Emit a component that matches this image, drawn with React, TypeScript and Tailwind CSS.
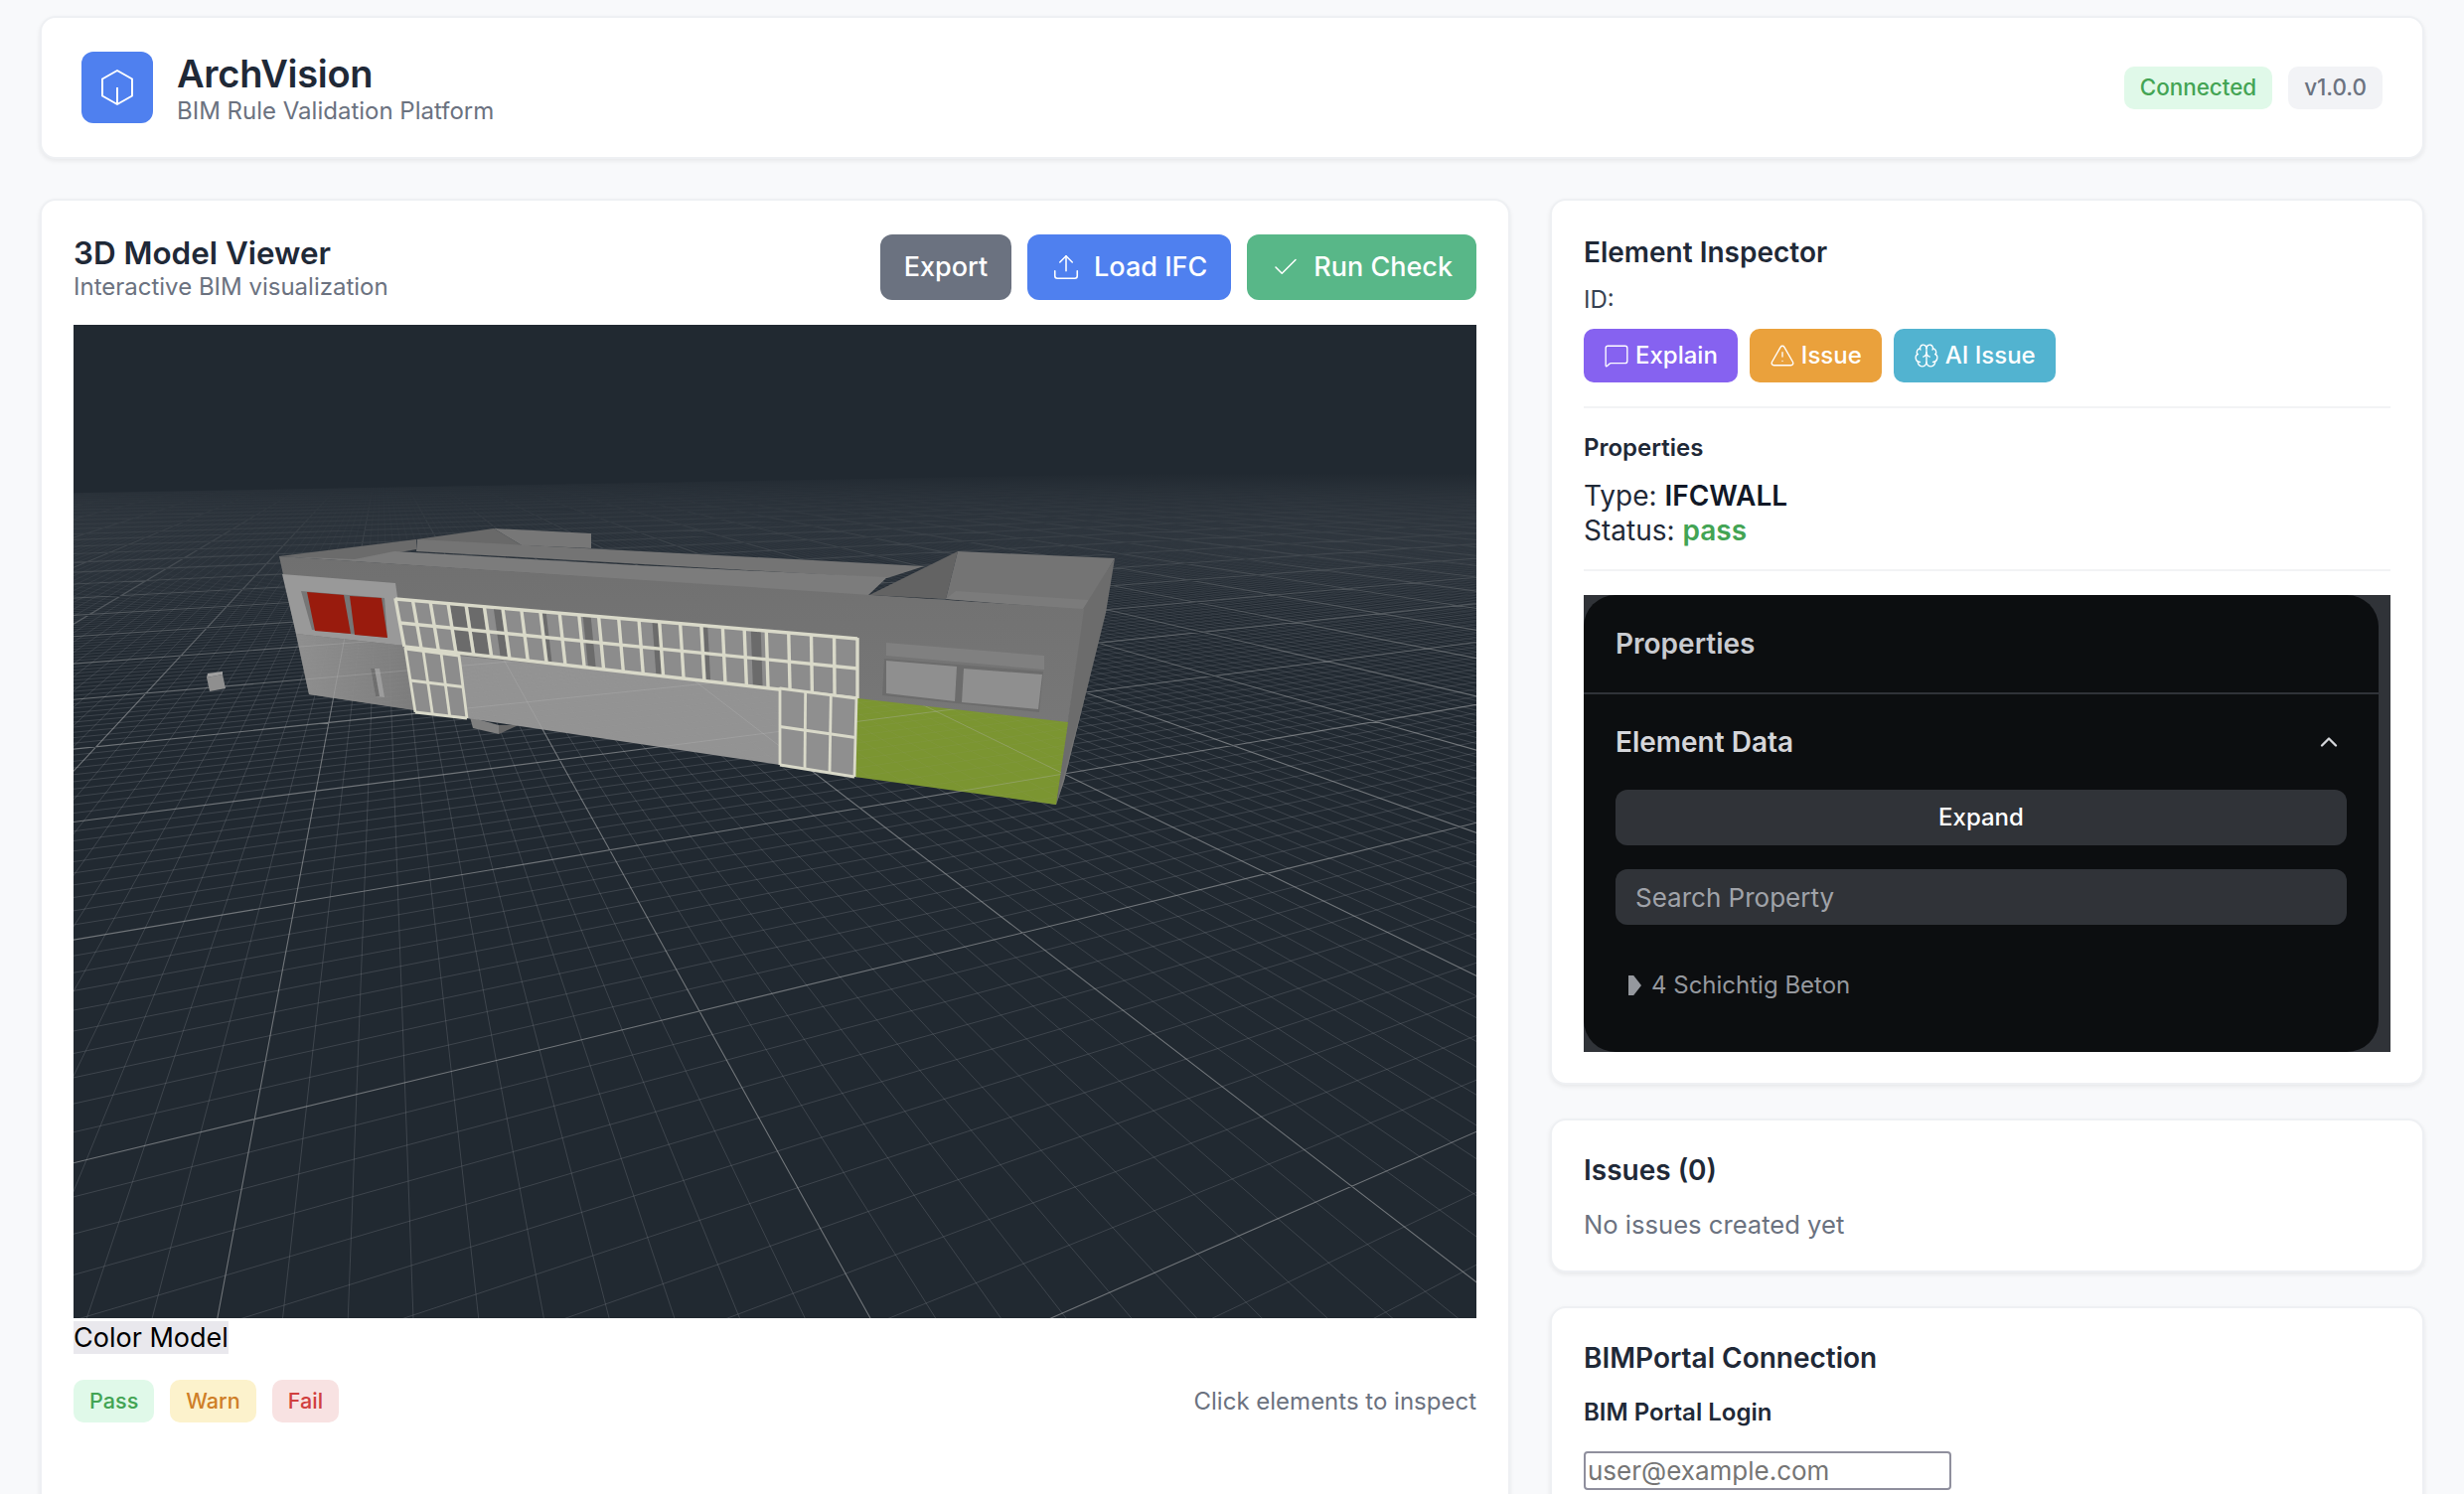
import React from "react";
import { Upload, Check, MessageSquare, TriangleAlert, Brain, ChevronUp } from "lucide-react";

// ground plane projection measured from the major grid crossings
const project = (u: number, v: number) => {
  const w = 1 + 0.1589 * u - 0.3935 * v;
  return [
    (630 + 476.7 * u - 122 * v) / w,
    (691 + 18.43 * u - 45.65 * v) / w,
  ];
};

const segU = (u: number) => {
  const near = Math.min(3, (1 + 0.1589 * u - 0.03) / 0.3935);
  if (near <= -28) return "";
  const a = project(u, -28);
  const b = project(u, near);
  return `M${a[0].toFixed(1)} ${a[1].toFixed(1)}L${b[0].toFixed(1)} ${b[1].toFixed(1)}`;
};

const segV = (v: number) => {
  const start = Math.max(-44, (0.03 - 1 + 0.3935 * v) / 0.1589);
  if (start >= 44) return "";
  const a = project(start, v);
  const b = project(44, v);
  return `M${a[0].toFixed(1)} ${a[1].toFixed(1)}L${b[0].toFixed(1)} ${b[1].toFixed(1)}`;
};

let minorPath = "";
let majorPath = "";
for (let i = -440; i <= 440; i++) {
  if (i % 10 === 0) majorPath += segU(i / 10);
  else minorPath += segU(i / 10);
}
for (let i = -280; i <= 30; i++) {
  if (i % 10 === 0) majorPath += segV(i / 10);
  else minorPath += segV(i / 10);
}

type Pt = [number, number];

const quadPoint = (q: Pt[], s: number, t: number): Pt => {
  const top: Pt = [q[0][0] + (q[1][0] - q[0][0]) * s, q[0][1] + (q[1][1] - q[0][1]) * s];
  const bot: Pt = [q[3][0] + (q[2][0] - q[3][0]) * s, q[3][1] + (q[2][1] - q[3][1]) * s];
  return [top[0] + (bot[0] - top[0]) * t, top[1] + (bot[1] - top[1]) * t];
};

const warp = (t: number, k: number) => t / (t + k * (1 - t));

const Poly = ({ p, fill }: { p: string; fill: string }) => <polygon points={p} fill={fill} />;

const Curtain = ({
  q,
  cols,
  rows,
  k = 1,
  fill,
  width = 3.4,
  strips = [],
}: {
  q: Pt[];
  cols: number;
  rows: number;
  k?: number;
  fill: string;
  width?: number;
  strips?: [number, number, number][];
}) => {
  const lines: React.ReactNode[] = [];
  for (let i = 0; i <= cols; i++) {
    const s = warp(i / cols, k);
    const a = quadPoint(q, s, -0.015);
    const b = quadPoint(q, s, 1);
    lines.push(<line key={`c${i}`} x1={a[0]} y1={a[1]} x2={b[0]} y2={b[1]} />);
  }
  for (let j = 0; j <= rows; j++) {
    const a = quadPoint(q, 0, j / rows);
    const b = quadPoint(q, 1, j / rows);
    lines.push(<line key={`r${j}`} x1={a[0]} y1={a[1]} x2={b[0]} y2={b[1]} />);
  }
  return (
    <g>
      <polygon points={q.map((p) => p.join(",")).join(" ")} fill={fill} />
      {strips.map(([col, from, to]) => {
        const s0 = warp((col + from) / cols, k);
        const s1 = warp((col + to) / cols, k);
        const pts = [quadPoint(q, s0, 0), quadPoint(q, s1, 0), quadPoint(q, s1, 1), quadPoint(q, s0, 1)];
        return <polygon key={`${col}-${from}`} points={pts.map((p) => p.join(",")).join(" ")} fill="#6b6b6b" />;
      })}
      <g stroke="#d9d9c9" strokeWidth={width}>
        {lines}
      </g>
    </g>
  );
};

const ModelScene = () => (
  <svg viewBox="74 327 1412 1000" className="block w-full h-full">
    <defs>
      <linearGradient id="fog" x1="0" y1="0" x2="0" y2="1">
        <stop offset="0" stopColor="#212931" stopOpacity="1" />
        <stop offset="0.38" stopColor="#212931" stopOpacity="1" />
        <stop offset="0.47" stopColor="#212931" stopOpacity="0.86" />
        <stop offset="0.62" stopColor="#212931" stopOpacity="0.6" />
        <stop offset="0.8" stopColor="#212931" stopOpacity="0.28" />
        <stop offset="1" stopColor="#212931" stopOpacity="0" />
      </linearGradient>
      <linearGradient id="wall" x1="0" y1="0" x2="0" y2="1">
        <stop offset="0" stopColor="#707070" />
        <stop offset="1" stopColor="#7b7b7b" />
      </linearGradient>
      <linearGradient id="lowerLeft" x1="0" y1="0" x2="1" y2="0">
        <stop offset="0" stopColor="#8f8f8f" />
        <stop offset="1" stopColor="#7c7c7c" />
      </linearGradient>
      <clipPath id="planes">
        <polygon points="462,660 785,693 785,770 470,723" />
        <polygon points="863,703 1075,727 1063,810 860,782" />
        <polygon points="298,638 407,650 417,715 311,699" />
      </clipPath>
    </defs>

    <g transform="translate(74 327)" fill="none">
      <path d={minorPath} stroke="#8b9096" strokeOpacity="0.34" strokeWidth="0.8" />
      <path d={majorPath} stroke="#aeb0b2" strokeOpacity="0.56" strokeWidth="1.1" />
    </g>
    <rect x="74" y="327" width="1412" height="393" fill="url(#fog)" />

    {/* small parts under and beside the building */}
    <Poly p="208,682 224,679 227,693 211,696" fill="#8f8f8f" />
    <Poly p="208,682 224,679 224,676 209,678" fill="#a0a0a0" />
    <Poly p="473,722 502,730 502,739 476,733" fill="#7f7f7f" />
    <Poly p="502,730 522,730 502,739" fill="#666666" />

    {/* roof */}
    <Poly p="497,532 595,537 595,552 525,549" fill="#777777" />
    <Poly p="419,543 497,532 525,549 440,552" fill="#696969" />
    <Poly p="281,560 419,543 419,553 357,564" fill="#6b6b6b" />
    <Poly p="420,543 930,570 893,582 419,555" fill="#747474" />
    <Poly p="397,555 640,569 893,581 873,600 281,560 357,563" fill="#7c7c7c" />
    <Poly p="964,555 952,603 875,599" fill="#636363" />
    <Poly p="964,555 1122,562 1092,614 952,603" fill="#747474" />
    <Poly p="962,595 1096,604 1092,614 952,603" fill="#7b7b7b" />
    <Poly p="1122,562 1090,613 1063,810 1071,786 1113,617" fill="#6c6c6c" />
    <Poly p="1092,700 1113,617 1071,786 1063,810" fill="#747474" />

    {/* front wall */}
    <Poly p="281,560 1091,613 1063,810 311,699" fill="url(#wall)" />
    <Poly p="284,578 398,587 407,650 298,638" fill="#999999" />
    <Poly p="303,595 387,602 390,642 314,634" fill="#767676" />
    <Poly p="309,596 346,599 353,638 317,635" fill="#991b0d" />
    <Poly p="352,600 384,602 390,642 357,639" fill="#991b0d" />
    <Poly p="298,638 407,650 417,715 311,699" fill="url(#lowerLeft)" />
    <Poly p="373,673 382,673 387,702 378,701" fill="#9d9d9d" />
    <Poly p="373,673 377,673 382,701 378,701" fill="#6e6e6e" />
    <Poly p="462,660 785,693 785,770 470,723" fill="#939393" />

    {/* right windows */}
    <Poly p="892,647 1051,660 1051,674 892,660" fill="#808080" />
    <Poly p="890,663 1050,676 1046,717 888,700" fill="#6c6c6c" />
    <Poly p="892,665 963,671 961,706 892,698" fill="#8f8f8f" />
    <Poly p="970,673 1049,679 1045,714 968,707" fill="#8f8f8f" />

    {/* green wall */}
    <Poly p="863,703 1075,727 1063,810 860,782" fill="#7b9531" />

    {/* grid shows through the lower walls */}
    <g clipPath="url(#planes)">
      <g transform="translate(74 327)" fill="none">
        <path d={minorPath} stroke="#a6a6a6" strokeOpacity="0.09" strokeWidth="0.8" />
        <path d={majorPath} stroke="#b4b4b4" strokeOpacity="0.35" strokeWidth="1" />
      </g>
    </g>

    {/* curtain walls */}
    <Curtain
      q={[
        [398, 603],
        [863, 643],
        [863, 703],
        [407, 651],
      ]}
      cols={23}
      rows={2}
      k={1.167}
      fill="#8c8c8c"
      strips={[
        [3, 0.1, 0.9],
        [4, 0.1, 0.9],
        [5, 0.5, 0.9],
        [8, 0.1, 0.3],
        [10, 0.2, 0.6],
        [13, 0.65, 0.95],
        [16, 0.1, 0.3],
        [18, 0.3, 0.75],
      ]}
    />
    <Curtain
      q={[
        [408, 653],
        [462, 660],
        [470, 723],
        [418, 717],
      ]}
      cols={3}
      rows={2}
      fill="#8c8c8c"
      width={2.8}
    />
    <Poly p="786,755 860,766 860,780 786,770" fill="#7a7a7a" />
    <Curtain
      q={[
        [785, 693],
        [862, 703],
        [860, 782],
        [785, 770],
      ]}
      cols={3}
      rows={2}
      fill="#8f8f8f"
      width={2.8}
    />
  </svg>
);

const Card = ({ className, children }: { className?: string; children: React.ReactNode }) => (
  <div className={`bg-white rounded-2xl border-2 border-[#eef0f3] shadow-[0_2px_5px_rgba(0,0,0,0.07)] ${className ?? ""}`}>
    {children}
  </div>
);

const ActionButton = ({ className, children }: { className: string; children: React.ReactNode }) => (
  <button className={`h-[66px] px-6 rounded-xl text-white text-[27px] font-medium flex items-center gap-[13px] ${className}`}>
    {children}
  </button>
);

const SmallButton = ({ className, children }: { className: string; children: React.ReactNode }) => (
  <button className={`h-[54px] px-5 rounded-[10px] text-white text-2xl font-medium flex items-center gap-[6px] ${className}`}>
    {children}
  </button>
);

const Badge = ({ className, children }: { className: string; children: React.ReactNode }) => (
  <span className={`h-[43px] px-4 rounded-[10px] font-medium flex items-center ${className}`}>{children}</span>
);

export default function App() {
  return (
    <div className="h-[1504px] overflow-hidden bg-[#f8f9fb] pt-4 px-10 [font-family:Inter,sans-serif] text-[#1f2937]">
      <Card className="h-[144px] px-10 flex items-center justify-between">
        <div className="flex items-center gap-[24px]">
          <div className="w-[72px] h-[72px] rounded-xl bg-[#4f80ef] flex items-center justify-center">
            <svg width="34" height="38" viewBox="0 0 34 38" fill="none" stroke="white" strokeWidth="2" strokeLinejoin="round">
              <polygon points="17,2 32,10.5 32,27.5 17,36 2,27.5 2,10.5" />
              <line x1="17" y1="19" x2="17" y2="36" />
            </svg>
          </div>
          <div className="pt-[2px]">
            <h1 className="text-[38px] leading-[46px] font-semibold tracking-[-0.3px]">ArchVision</h1>
            <p className="text-2xl leading-[30px] text-[#6b7280]">BIM Rule Validation Platform</p>
          </div>
        </div>
        <div className="flex items-center gap-4">
          <Badge className="text-[22.4px] bg-[#e0f9e9] text-[#43a454]">Connected</Badge>
          <Badge className="text-[22.4px] bg-[#f2f3f6] text-[#6b7280]">v1.0.0</Badge>
        </div>
      </Card>

      <div className="mt-10 grid grid-cols-[1480px_880px] gap-10 items-start">
        <Card className="h-[1500px] px-8 pt-[34px]">
          <div className="flex items-start justify-between">
            <div>
              <h2 className="text-[31.4px] leading-[38px] font-semibold">3D Model Viewer</h2>
              <p className="text-2xl leading-[30px] text-[#6b7280]">Interactive BIM visualization</p>
            </div>
            <div className="flex gap-4">
              <ActionButton className="bg-[#6b7280]">Export</ActionButton>
              <ActionButton className="bg-[#4f80ef]">
                <Upload className="w-[30px] h-[30px]" strokeWidth={1.25} />
                Load IFC
              </ActionButton>
              <ActionButton className="bg-[#58b788]">
                <Check className="w-[30px] h-[30px]" strokeWidth={1.25} />
                Run Check
              </ActionButton>
            </div>
          </div>
          <div className="mt-[23px] h-[1000px] bg-[#212931]">
            <ModelScene />
          </div>
          <div className="mt-[3px] leading-[33px]">
            <span className="inline-block h-[33px] bg-[#e9e8ed] text-black text-[27px]">Color Model</span>
          </div>
          <div className="mt-[22px] flex items-center justify-between">
            <div className="flex gap-4">
              <Badge className="text-[21.6px] bg-[#e0f9e9] text-[#43a454]">Pass</Badge>
              <Badge className="text-[21.6px] bg-[#fcf2cc] text-[#cf7e27]">Warn</Badge>
              <Badge className="text-[21.6px] bg-[#f8e2e2] text-[#d13f3f]">Fail</Badge>
            </div>
            <span className="text-2xl text-[#6b7280]">Click elements to inspect</span>
          </div>
        </Card>

        <div className="flex flex-col gap-[34px]">
          <Card className="h-[892px] px-8 pt-[34px]">
            <h3 className="text-[28px] leading-9 font-semibold">Element Inspector</h3>
            <p className="mt-[14px] text-2xl leading-8 text-[#374151]">ID:</p>
            <div className="mt-[13px] flex gap-3">
              <SmallButton className="bg-[#8662f0]">
                <MessageSquare className="w-[26px] h-[26px]" strokeWidth={1.25} />
                Explain
              </SmallButton>
              <SmallButton className="bg-[#eaa13c]">
                <TriangleAlert className="w-[26px] h-[26px]" strokeWidth={1.25} />
                Issue
              </SmallButton>
              <SmallButton className="bg-[#52b3d0]">
                <Brain className="w-[26px] h-[26px]" strokeWidth={1.25} />
                AI Issue
              </SmallButton>
            </div>
            <div className="mt-6 h-[2px] bg-[#f2f3f5]" />
            <h4 className="mt-[24px] text-2xl leading-8 font-semibold">Properties</h4>
            <div className="mt-[15px] text-[28px] leading-[35px]">
              <p>
                Type: <span className="font-semibold text-[#111827]">IFCWALL</span>
              </p>
              <p>
                Status: <span className="font-semibold text-[#43a454]">pass</span>
              </p>
            </div>
            <div className="mt-[21px] h-[2px] bg-[#f2f3f5]" />
            <div className="mt-6 h-[460px] bg-[#303338]">
              <div className="w-[800px] h-full rounded-[32px] bg-[#0c0e10] text-[#d5d6da]">
                <div className="h-[100px] px-8 flex items-center border-b-2 border-[#303338]">
                  <span className="text-[28px] font-semibold text-[#c9cbd0]">Properties</span>
                </div>
                <div className="px-8">
                  <div className="h-[96px] flex items-center justify-between">
                    <span className="text-[28px] font-semibold">Element Data</span>
                    <ChevronUp className="w-7 h-7 mr-1" strokeWidth={2} />
                  </div>
                  <button className="w-full h-[56px] rounded-xl bg-[#303338] text-2xl font-medium text-white">Expand</button>
                  <input
                    className="mt-6 w-full h-[56px] rounded-xl bg-[#303338] px-5 text-[26px] placeholder:text-[#a0a3a9] outline-none"
                    placeholder="Search Property"
                  />
                  <div className="mt-[45px] pl-[13px] flex items-center gap-[10px] text-2xl text-[#95989e]">
                    <span className="w-[13px] h-5 bg-[#95989e] [clip-path:polygon(0_0,40%_0,100%_50%,40%_100%,0_100%)]" />
                    4 Schichtig Beton
                  </div>
                </div>
              </div>
            </div>
          </Card>

          <Card className="h-[155px] px-8 pt-[32px]">
            <h3 className="text-[28px] leading-9 font-semibold">Issues (0)</h3>
            <p className="mt-[21px] text-[25.6px] leading-8 text-[#6b7280]">No issues created yet</p>
          </Card>

          <Card className="h-[400px] px-8 pt-[32px]">
            <h3 className="text-[28px] leading-9 font-semibold">BIMPortal Connection</h3>
            <p className="mt-[21px] text-2xl leading-8 font-semibold">BIM Portal Login</p>
            <input
              className="mt-[23px] block w-[370px] h-[39px] rounded-[4px] border-2 border-[#8f8f9d] px-[2px] text-[26px] placeholder:text-[#757575]"
              placeholder="user@example.com"
            />
          </Card>
        </div>
      </div>
    </div>
  );
}
